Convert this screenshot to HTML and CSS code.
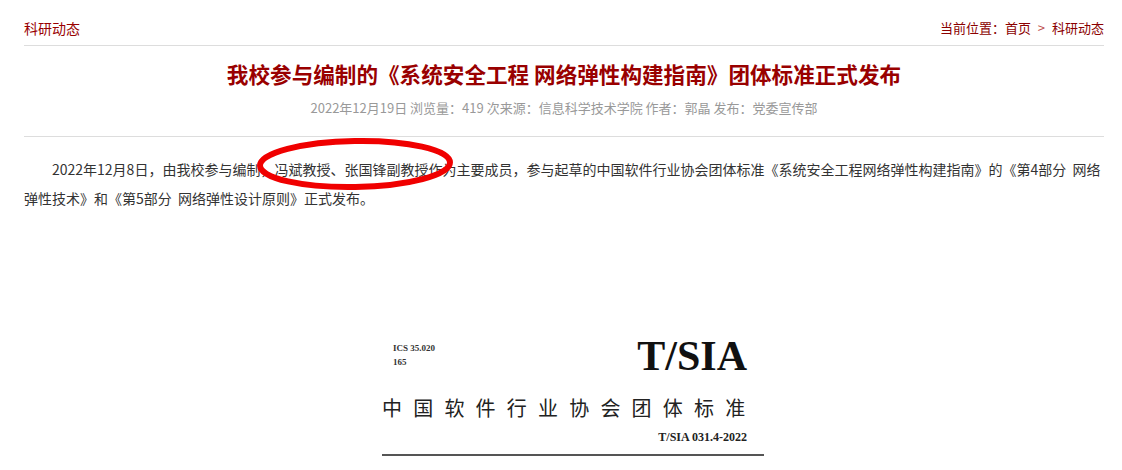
FILE: index.html
```html
<!DOCTYPE html>
<html lang="zh-CN">
  <head>
    <meta charset="UTF-8" />
    <meta name="viewport" content="width=device-width, initial-scale=1" />
    <title>科研动态</title>
    <link rel="stylesheet" href="styles.css">
  </head>
  <body>
    <div class="wrap">
      <div class="column-head">
        <h2 class="column-name">科研动态</h2>
        <div class="crumbs">
          当前位置：<a href="#">首页</a>
          <span class="sep">&gt;</span>
          <a href="#">科研动态</a>
        </div>
      </div>

      <div class="article">
        <h1 class="article-title">我校参与编制的《系统安全工程 网络弹性构建指南》团体标准正式发布</h1>
        <div class="article-meta">2022年12月19日 浏览量：419 次来源：信息科学技术学院 作者：郭晶 发布：党委宣传部</div>

        <div class="article-body">
          <p class="para">2022年12月8日，由我校参与编制，冯斌教授、张国锋副教授作为主要成员，参与起草的中国软件行业协会团体标准《系统安全工程网络弹性构建指南》的《第4部分&nbsp;&nbsp;网络弹性技术》和《第5部分&nbsp;&nbsp;网络弹性设计原则》正式发布。</p>
          <!-- red circle marked on the original post -->
          <svg class="mark-ring" width="204" height="60" viewBox="0 0 204 60">
            <ellipse cx="102" cy="29" rx="95" ry="23" fill="none" stroke="#f00000" stroke-width="6" transform="rotate(-1 102 29)" />
          </svg>

          <div class="figure">
            <div class="cover">
              <div class="cover-top">
                <div class="ics">ICS 35.020<br>165</div>
                <div class="brand">T/SIA</div>
              </div>
              <div class="cover-title">中国软件行业协会团体标准</div>
              <div class="cover-code">T/SIA 031.4-2022</div>
              <div class="cover-rule"></div>
            </div>
          </div>
        </div>
      </div>
    </div>
  </body>
</html>
```

FILE: styles.css
```css
/* Reset and basic styles */
* {
  margin: 0;
  padding: 0;
  box-sizing: border-box;
}
body {
  font-family: "Noto Sans CJK SC", "Noto Sans", sans-serif;
  background: #fff;
  color: #333;
}
a {
  color: inherit;
  text-decoration: none;
}
.wrap {
  width: 1080px;
  margin-left: 24px;
}

/* column header + breadcrumb */
.column-head {
  display: flex;
  justify-content: space-between;
  align-items: flex-end;
  height: 46px;
  padding-bottom: 8px;
  border-bottom: 1px solid #dddddd;
}
.column-name {
  font-size: 14px;
  font-weight: normal;
  line-height: 18px;
  color: #990000;
}
.crumbs {
  font-size: 13px;
  line-height: 18px;
  color: #8b0000;
}
.crumbs .sep {
  color: #c0504d;
  margin: 0 4px;
}

/* article */
.article-title {
  margin-top: 13px;
  text-align: center;
  font-size: 21.6px;
  font-weight: bold;
  line-height: 30px;
  color: #990000;
}
.article-meta {
  margin-top: 9px;
  text-align: center;
  font-size: 13px;
  line-height: 20px;
  color: #999;
  padding-bottom: 18px;
  border-bottom: 1px solid #dddddd;
}
.article-body {
  position: relative;
  padding-top: 18px;
}
.para {
  font-size: 14px;
  line-height: 29px;
  text-indent: 2em;
  color: #333;
}
.mark-ring {
  position: absolute;
  left: 229px;
  top: -2px;
}

/* picture of the standard cover */
.figure {
  margin-top: 122px;
  display: flex;
  justify-content: center;
}
.cover {
  width: 400px;
  padding-left: 18px;
  color: #1a1a1a;
}
.cover-top {
  display: flex;
  justify-content: space-between;
  align-items: flex-start;
  margin-right: 17px;
}
.ics {
  padding: 6px 0 0 11px;
  font-family: "Liberation Serif", serif;
  font-size: 9px;
  font-weight: bold;
  line-height: 14px;
  color: #333;
}
.brand {
  font-family: "Liberation Serif", serif;
  font-size: 42px;
  font-weight: bold;
  line-height: 42px;
  color: #111;
}
.cover-title {
  margin-top: 18px;
  font-size: 20px;
  line-height: 26px;
  letter-spacing: 11.2px;
  color: #222;
}
.cover-code {
  margin: 8px 17px 0 0;
  text-align: right;
  font-family: "Liberation Serif", serif;
  font-size: 12px;
  font-weight: bold;
  line-height: 16px;
  color: #222;
}
.cover-rule {
  margin-top: 9px;
  height: 2px;
  background: #555;
}
```
